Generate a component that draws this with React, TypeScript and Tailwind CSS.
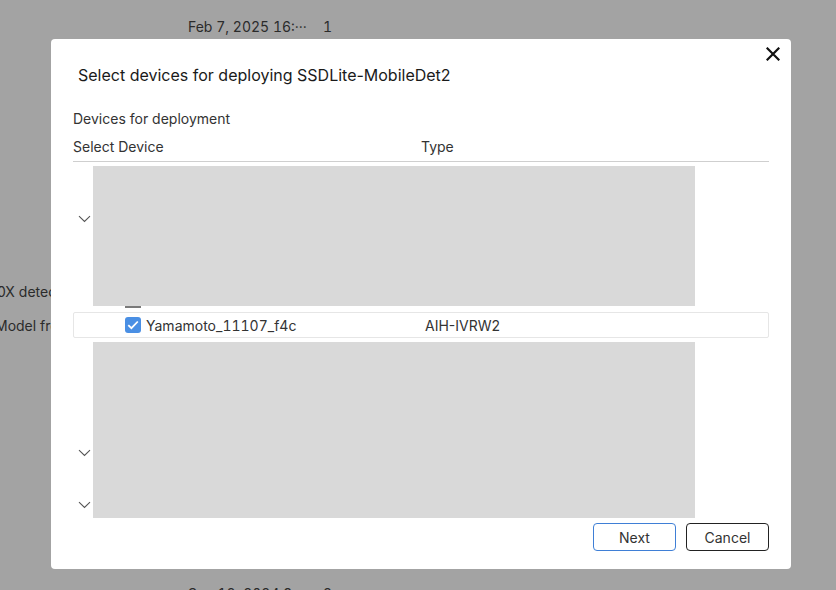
import React from "react";

const FONT = { fontFamily: 'Inter, "Noto Sans CJK JP", sans-serif' };

function Chevron() {
  return (
    <svg width="13" height="8" viewBox="0 0 13 8" fill="none">
      <path d="M1 1.2 L6.5 6.5 L12 1.2" stroke="#555" strokeWidth="1.1" />
    </svg>
  );
}

function CloseIcon() {
  return (
    <svg width="14" height="14" viewBox="0 0 14 14">
      <path d="M1.5 1.5 L12.5 12.5 M12.5 1.5 L1.5 12.5" stroke="#111" strokeWidth="2.2" strokeLinecap="square" />
    </svg>
  );
}

export default function App() {
  return (
    <div className="relative w-[836px] h-[590px] overflow-hidden bg-[#a3a3a3] text-[#2b2b2b]" style={FONT}>
      {/* page behind the overlay */}
      <div className="absolute left-[188px] top-[17px] flex text-[14px] leading-[20px] tabular-nums">
        <span className="w-[135px]">Feb 7, 2025 16:···</span>
        <span>1</span>
      </div>
      <div className="absolute left-[-3px] top-[282px] text-[14px] leading-[20px]">0X detection</div>
      <div className="absolute left-[-5px] top-[316px] text-[14px] leading-[20px]">Model from</div>
      <div className="absolute left-[188px] top-[584px] flex text-[14px] leading-[20px] tabular-nums">
        <span className="w-[135px]">Sep 18, 2024 9:···</span>
        <span>2</span>
      </div>

      {/* dialog */}
      <div className="absolute left-[51px] top-[39px] w-[740px] h-[530px] rounded-[4px] bg-white flex flex-col pt-[24px] text-[#333]">
        <button className="absolute right-[11px] top-[8px] p-[0px]">
          <CloseIcon />
        </button>

        <h2 className="pl-[27px] text-[16px] leading-[24px] text-[#1a1a1a]">
          Select devices for deploying SSDLite-MobileDet2
        </h2>

        <div className="px-[22px] flex flex-col">
          <div className="mt-[22px] text-[14px] leading-[20px]">Devices for deployment</div>

          <div className="mt-[8px] h-[25px] flex text-[14px] leading-[20px] border-b border-[#cfcfcf]">
            <div className="w-[348px]">Select Device</div>
            <div>Type</div>
          </div>

          {/* group 1 */}
          <div className="mt-[4px] flex">
            <div className="w-[20px] pt-[49px] pl-[5px]">
              <Chevron />
            </div>
            <div className="w-[602px] h-[140px] bg-[#d9d9d9]" />
          </div>
          <div className="h-[6px] pl-[52px]">
            <div className="w-[16px] h-[2px] bg-[#7a7a7a]" />
          </div>

          {/* selected device row */}
          <div className="h-[26px] flex items-center border border-[#e6e6e6] rounded-[2px] text-[14px]">
            <div className="w-[351px] pl-[51px] flex items-center gap-[5px]">
              <span className="w-[16px] h-[16px] rounded-[3px] bg-[#4a8fe4] flex items-center justify-center">
                <svg width="12" height="10" viewBox="0 0 12 10" fill="none">
                  <path d="M1.3 5.2 L4.4 8.2 L10.8 1.5" stroke="#fff" strokeWidth="1.8" />
                </svg>
              </span>
              <span className="tabular-nums">Yamamoto_11107_f4c</span>
            </div>
            <div>AIH-IVRW2</div>
          </div>

          {/* group 2 */}
          <div className="mt-[4px] flex">
            <div className="w-[20px] pl-[5px] flex flex-col">
              <div className="pt-[107px]">
                <Chevron />
              </div>
              <div className="pt-[44px]">
                <Chevron />
              </div>
            </div>
            <div className="w-[602px] h-[176px] bg-[#d9d9d9]" />
          </div>

          <div className="mt-[5px] flex justify-end gap-[10px] text-[14px]">
            <button className="w-[83px] h-[28px] rounded-[4px] border-[1.5px] border-[#3f7fd6] text-[#333]">
              Next
            </button>
            <button className="w-[83px] h-[28px] rounded-[4px] border-[1.5px] border-[#222] text-[#333]">
              Cancel
            </button>
          </div>
        </div>
      </div>
    </div>
  );
}
